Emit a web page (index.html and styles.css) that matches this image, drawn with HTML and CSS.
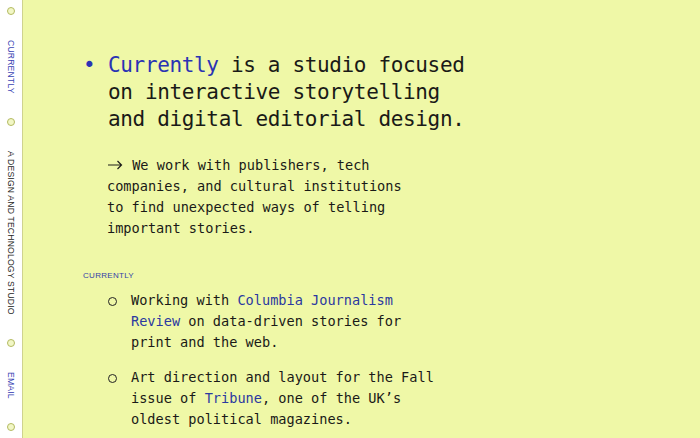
FILE: index.html
```html
<!DOCTYPE html>
<html lang="en">
<head>
  <meta charset="UTF-8" />
  <meta name="viewport" content="width=device-width, initial-scale=1.0" />
  <title>Currently</title>
  <link rel="stylesheet" href="styles.css">
</head>
<body>

  <nav class="rail">
    <span class="dot"></span>
    <a class="rail-link" href="#">Currently</a>
    <span class="dot"></span>
    <span class="rail-text">A design and technology studio</span>
    <span class="dot"></span>
    <a class="rail-link" href="#">Email</a>
    <span class="dot"></span>
  </nav>

  <main class="content">
    <h1 class="intro">
      <span class="intro-bullet">•</span>
      <span><a href="#">Currently</a> is a studio focused on interactive storytelling and digital editorial design.</span>
    </h1>

    <p class="lede"><svg class="arrow" width="16" height="10" viewBox="0 0 16 10"><path d="M1 5H14.5M10.5 1L14.5 5L10.5 9" fill="none" stroke="#1e1e1a" stroke-width="1.2"/></svg> We work with publishers, tech companies, and cultural institutions to find unexpected ways of telling important stories.</p>

    <h2 class="label">Currently</h2>
    <ul class="projects">
      <li>Working with <a href="#">Columbia Journalism Review</a> on data-driven stories for print and the web.</li>
      <li>Art direction and layout for the Fall issue of <a href="#">Tribune</a>, one of the UK’s oldest political magazines.</li>
    </ul>
  </main>

</body>
</html>
```

FILE: styles.css
```css
* { box-sizing: border-box; margin: 0; padding: 0; }
body {
  background-color: #eff8a7;
  font-family: 'DejaVu Sans Mono', 'Liberation Mono', monospace;
  color: #1a1a17;
  display: flex;
  height: 100vh;
  overflow: hidden;
}
a { color: #2a33b4; text-decoration: none; }

/* left rail */
.rail {
  width: 23px;
  flex-shrink: 0;
  background: #fff;
  border-right: 1px solid #cfd38e;
  display: flex;
  flex-direction: column;
  align-items: center;
  justify-content: space-between;
  padding: 7px 0 7px;
}
.dot {
  width: 8px;
  height: 8px;
  border-radius: 50%;
  border: 1.5px solid #b3ba62;
  background: #f2f7c6;
}
.rail-link, .rail-text {
  writing-mode: vertical-rl;
  font-family: 'Liberation Sans', Arial, sans-serif;
  font-size: 8.6px;
  letter-spacing: 0.2px;
  text-transform: uppercase;
  line-height: 10px;
}
.rail-link { color: #3944b4; }
.rail-text { color: #262624; }

/* main column */
.content {
  padding: 52px 0 0 60px;
}
.intro {
  display: flex;
  font-weight: normal;
  font-size: 21px;
  line-height: 27px;
  letter-spacing: -0.35px;
  width: 400px;
}
.intro-bullet {
  color: #2a33b4;
  width: 25px;
  flex-shrink: 0;
}
.lede {
  margin: 22px 0 0 24px;
  font-size: 13.6px;
  line-height: 21px;
  width: 310px;
}
.arrow {
  vertical-align: 0;
  margin-right: 1px;
}
.label {
  margin-top: 32px;
  font-family: 'Liberation Sans', Arial, sans-serif;
  font-size: 8px;
  line-height: 10px;
  letter-spacing: 0.3px;
  font-weight: normal;
  color: #3442a8;
  text-transform: uppercase;
}
.projects {
  list-style: none;
  margin-top: 9px;
  padding-left: 48px;
  font-size: 13.6px;
  line-height: 21px;
  width: 358px;
}
.projects li {
  position: relative;
  margin-bottom: 14px;
}
.projects li::before {
  content: '';
  position: absolute;
  left: -23px;
  top: 7px;
  width: 7px;
  height: 7px;
  border: 1.3px solid #222;
  border-radius: 50%;
}
.projects a { color: #2b39a0; }
```
